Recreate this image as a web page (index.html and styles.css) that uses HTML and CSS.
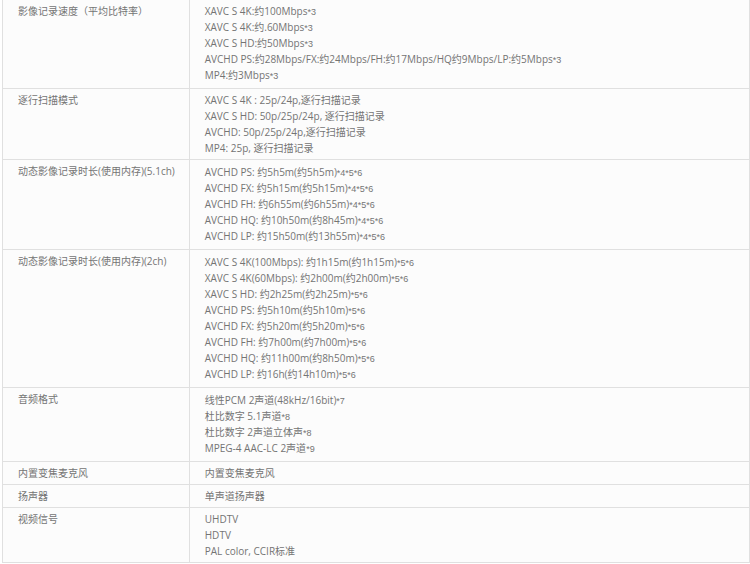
FILE: index.html
```html
<!DOCTYPE html>
<html lang="zh-CN">
<head>
  <meta charset="UTF-8" />
  <title>规格参数</title>
  <link rel="stylesheet" href="styles.css">
</head>
<body>
  <table class="spec">
    <tr>
      <th scope="row">影像记录速度（平均比特率）</th>
      <td class="first">
        XAVC S 4K:约100Mbps<span class="ref">*3</span><br>
        XAVC S 4K:约.60Mbps<span class="ref">*3</span><br>
        XAVC S HD:约50Mbps<span class="ref">*3</span><br>
        AVCHD PS:约28Mbps/FX:约24Mbps/FH:约17Mbps/HQ约9Mbps/LP:约5Mbps<span class="ref">*3</span><br>
        MP4:约3Mbps<span class="ref">*3</span>
      </td>
    </tr>
    <tr>
      <th scope="row">逐行扫描模式</th>
      <td>
        XAVC S 4K : 25p/24p,逐行扫描记录<br>
        XAVC S HD: 50p/25p/24p, 逐行扫描记录<br>
        AVCHD: 50p/25p/24p,逐行扫描记录<br>
        MP4: 25p, 逐行扫描记录
      </td>
    </tr>
    <tr>
      <th scope="row">动态影像记录时长(使用内存)(5.1ch)</th>
      <td class="notes">
        AVCHD PS: 约5h5m(约5h5m)<span class="ref">*4*5*6</span><br>
        AVCHD FX: 约5h15m(约5h15m)<span class="ref">*4*5*6</span><br>
        AVCHD FH: 约6h55m(约6h55m)<span class="ref">*4*5*6</span><br>
        AVCHD HQ: 约10h50m(约8h45m)<span class="ref">*4*5*6</span><br>
        AVCHD LP: 约15h50m(约13h55m)<span class="ref">*4*5*6</span>
      </td>
    </tr>
    <tr>
      <th scope="row">动态影像记录时长(使用内存)(2ch)</th>
      <td class="notes">
        XAVC S 4K(100Mbps): 约1h15m(约1h15m)<span class="ref">*5*6</span><br>
        XAVC S 4K(60Mbps): 约2h00m(约2h00m)<span class="ref">*5*6</span><br>
        XAVC S HD: 约2h25m(约2h25m)<span class="ref">*5*6</span><br>
        AVCHD PS: 约5h10m(约5h10m)<span class="ref">*5*6</span><br>
        AVCHD FX: 约5h20m(约5h20m)<span class="ref">*5*6</span><br>
        AVCHD FH: 约7h00m(约7h00m)<span class="ref">*5*6</span><br>
        AVCHD HQ: 约11h00m(约8h50m)<span class="ref">*5*6</span><br>
        AVCHD LP: 约16h(约14h10m)<span class="ref">*5*6</span>
      </td>
    </tr>
    <tr>
      <th scope="row">音频格式</th>
      <td class="notes">
        线性PCM 2声道(48kHz/16bit)<span class="ref">*7</span><br>
        杜比数字 5.1声道<span class="ref">*8</span><br>
        杜比数字 2声道立体声<span class="ref">*8</span><br>
        MPEG-4 AAC-LC 2声道<span class="ref">*9</span>
      </td>
    </tr>
    <tr>
      <th scope="row">内置变焦麦克风</th>
      <td>内置变焦麦克风</td>
    </tr>
    <tr>
      <th scope="row">扬声器</th>
      <td>单声道扬声器</td>
    </tr>
    <tr>
      <th scope="row">视频信号</th>
      <td>
        UHDTV<br>
        HDTV<br>
        PAL color, CCIR标准
      </td>
    </tr>
  </table>
</body>
</html>
```

FILE: styles.css
```css
body {
  margin: 0;
  padding: 0 0 0 2px;
  background: #fff;
  color: #747474;
  font-family: "Open Sans", "Noto Sans CJK SC", sans-serif;
  font-size: 10px;
  line-height: 16px;
}
.spec {
  width: 100%;
  border-collapse: separate;
  border-spacing: 0;
  border-left: 1px solid #e0e0e0;
  background: #fcfcfc;
}
.spec th,
.spec td {
  padding: 3px 15px;
  border-right: 1px solid #e0e0e0;
  border-bottom: 1px solid #e0e0e0;
  font-weight: normal;
  text-align: left;
  vertical-align: top;
}
.spec th {
  width: 25%;
  padding-right: 10px;
  box-sizing: border-box;
  white-space: nowrap;
}
.spec .first {
  padding-bottom: 5px;
}
/* lists with footnote marks get a little more air */
.spec .notes {
  padding-top: 4px;
  padding-bottom: 5px;
}
.ref {
  font-family: "Liberation Sans", sans-serif;
  font-size: 9px;
  line-height: 8px;
}
```
